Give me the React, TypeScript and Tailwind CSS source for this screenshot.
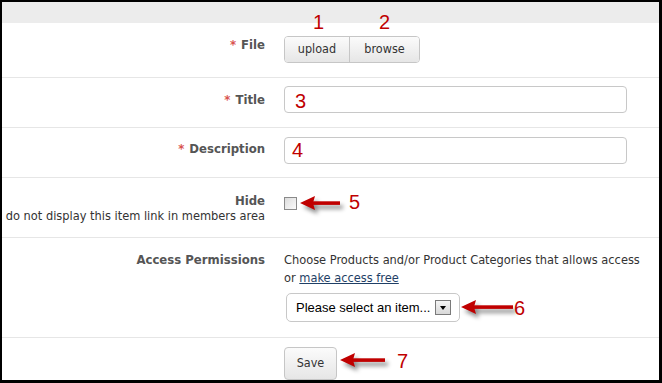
import React from "react";

function Arrow({ x, y, length }: { x: number; y: number; length: number }) {
  // tip sits at (x, y) in page coords, shaft runs to the right
  return (
    <svg
      className="absolute drop-shadow-[3px_4px_2px_rgba(0,0,0,0.45)]"
      style={{ left: x - 2, top: y - 2 - 8 }}
      width={length + 6}
      height={20}
      viewBox={`0 0 ${length + 6} 20`}
    >
      <polygon points="0,8 15,1 13,8 15,15" fill="#c00000" />
      <rect x={12} y={6.3} width={length - 12} height={3.6} fill="#c00000" />
    </svg>
  );
}

function Num({ n, x, y }: { n: string; x: number; y: number }) {
  return (
    <span
      className="absolute font-['Liberation_Sans',sans-serif] text-[20px] leading-none text-[#c00000]"
      style={{ left: x - 2, top: y - 2 }}
    >
      {n}
    </span>
  );
}

function Label({ text, required }: { text: string; required?: boolean }) {
  return (
    <span className="text-[13px] font-bold text-[#555]">
      {required && <span className="mr-[5px] text-[#d9534f]">*</span>}
      {text}
    </span>
  );
}

function Row({
  label,
  labelPad,
  fieldPad,
  height,
  children,
  last,
}: {
  label: React.ReactNode;
  labelPad: string;
  fieldPad: string;
  height: string;
  children: React.ReactNode;
  last?: boolean;
}) {
  return (
    <div className={`flex ${height} ${last ? "" : "border-b border-[#e6e6e6]"}`}>
      <div className={`w-[263px] shrink-0 text-right leading-[18px] ${labelPad}`}>{label}</div>
      <div className={`pl-[19px] ${fieldPad}`}>{children}</div>
    </div>
  );
}

const btn =
  "flex h-full items-center justify-center bg-linear-to-b from-[#fbfbfb] to-[#e6e6e6] text-[12.5px] text-[#333]";

export default function App() {
  return (
    <div className="relative h-[383px] w-[662px] overflow-hidden border-t-2 border-r-[3px] border-b-[3px] border-l-2 border-black bg-white font-['DejaVu_Sans_Condensed','Liberation_Sans',sans-serif] text-[12.7px] text-[#333]">
      <div className="h-[21px] bg-[#ececec]" />

      <Row label={<Label text="File" required />} labelPad="pt-[13px]" fieldPad="pt-[13px]" height="h-[55px]">
        <div className="flex h-[27px] overflow-hidden rounded-[4px] border border-[#c6c6c6]">
          <div className={`${btn} w-[65px] border-r border-[#c6c6c6]`}>upload</div>
          <div className={`${btn} w-[69px]`}>browse</div>
        </div>
      </Row>

      <Row label={<Label text="Title" required />} labelPad="pt-[13px]" fieldPad="pt-[8px]" height="h-[50px]">
        <div className="h-[27px] w-[343px] rounded-[4px] border border-[#c8c8c8] bg-white" />
      </Row>

      <Row label={<Label text="Description" required />} labelPad="pt-[12px]" fieldPad="pt-[9px]" height="h-[50px]">
        <div className="h-[27px] w-[343px] rounded-[4px] border border-[#c8c8c8] bg-white" />
      </Row>

      <Row
        label={
          <div className="leading-[15px]">
            <div className="text-[13px] font-bold text-[#555]">Hide</div>
            <div className="text-[#333]">do not display this item link in members area</div>
          </div>
        }
        labelPad="pt-[15px]"
        fieldPad="pt-[19px]"
        height="h-[60px]"
      >
        <div className="h-[13px] w-[13px] border border-[#8a8a8a] bg-linear-to-br from-[#dcdcdc] to-[#fbfbfb]" />
      </Row>

      <Row label={<Label text="Access Permissions" />} labelPad="pt-[13px]" fieldPad="pt-[13px]" height="h-[100px]">
        <p className="leading-[18px] whitespace-nowrap text-[#333]">
          Choose Products and/or Product Categories that allows access
          <br />
          or <a className="text-[#1f3f66] underline">make access free</a>
        </p>
        <div className="mt-[6px] ml-[2px] flex h-[29px] w-[174px] items-center rounded-[5px] border border-[#c8c8c8] bg-white pl-[9px] font-['Liberation_Sans',sans-serif] text-[13px] text-black">
          <span>Please select an item...</span>
          <span className="ml-[5px] flex h-[15px] w-[16px] items-center justify-center border border-[#7a7a7a] bg-linear-to-b from-[#f4f4f4] to-[#d8d8d8]">
            <span className="h-0 w-0 border-x-[3.5px] border-t-[4px] border-x-transparent border-t-black" />
          </span>
        </div>
      </Row>

      <Row label={null} labelPad="" fieldPad="pt-[9px]" height="h-[42px]" last>
        <div className={`${btn} h-[27px] w-[53px] rounded-[4px] border border-[#c6c6c6]`}>Save</div>
      </Row>

      <Num n="1" x={313} y={12} />
      <Num n="2" x={379} y={12} />
      <Num n="3" x={295} y={91} />
      <Num n="4" x={292} y={140} />
      <Arrow x={300} y={203} length={40} />
      <Num n="5" x={349} y={192} />
      <Arrow x={461} y={307} length={52} />
      <Num n="6" x={514} y={298} />
      <Arrow x={340} y={360} length={45} />
      <Num n="7" x={397} y={351} />
    </div>
  );
}
